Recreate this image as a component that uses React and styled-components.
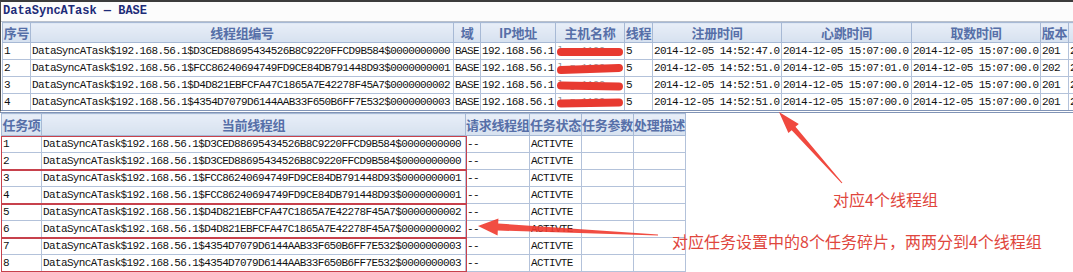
import React from 'react';
import styled, { createGlobalStyle } from 'styled-components';

const GlobalStyle = createGlobalStyle`
  html, body {
    margin: 0;
    padding: 0;
    background: #ffffff;
  }
  body {
    font-family: "Liberation Mono", monospace;
    overflow: hidden;
  }
`;

const MONO = `"Liberation Mono", "DejaVu Sans Mono", monospace`;
const CJK = `"Noto Sans CJK SC", "Noto Sans", sans-serif`;

const Page = styled.div`
  position: relative;
  width: 1073px;
  height: 272px;
  overflow: hidden;
  display: flex;
  flex-direction: column;
  background: #fff;
`;

const TopPanel = styled.section`
  border-top: 2px solid #3c3c3c;
  border-left: 1px solid #4a4a4a;
  border-bottom: 3px double #8194b6;
  overflow: hidden;
`;

const Title = styled.div`
  height: 19px;
  line-height: 19px;
  padding-left: 2px;
  font-family: ${MONO};
  font-weight: bold;
  font-size: 12px;
  color: #1d2b78;
  background: #fcfcfc;
  border-bottom: 1px solid #b9c0cb;
  white-space: nowrap;
`;

const Grid = styled.table`
  border-collapse: collapse;
  table-layout: fixed;
  width: ${p => p.$width}px;
  margin-left: ${p => p.$indent || 0}px;
`;

const Th = styled.th`
  height: ${p => p.$h || 19}px;
  padding: 0;
  background: linear-gradient(#e8eef8, #d6e1ef);
  border: 1px solid #a7b9d5;
  color: #566fa8;
  font-family: ${CJK};
  font-size: 13px;
  font-weight: bold;
  text-align: center;
  white-space: nowrap;
  overflow: hidden;
  letter-spacing: -0.3px;
`;

const Td = styled.td`
  height: 16px;
  padding: 0 0 0 1px;
  background: #fff;
  border: 1px solid #b3c2da;
  color: #111;
  font-family: ${MONO};
  font-size: 11px;
  letter-spacing: -0.63px;
  white-space: nowrap;
  overflow: hidden;
  position: relative;
`;

const Scribble = styled.span`
  position: absolute;
  left: 1px;
  top: 5px;
  width: 66px;
  height: 8px;
  border-radius: 5px;
  background: #e83a30;
  transform: rotate(${p => p.$tilt}deg);
`;

const FaintHost = styled.span`
  color: #999;
`;

const BottomWrap = styled.div`
  position: relative;
  align-self: flex-start;
  margin-left: 1px;
`;

const RedBox = styled.div`
  position: absolute;
  left: 0;
  width: 464px;
  height: 32px;
  top: ${p => 23 + p.$index * 34}px;
  border: 1px solid #c7414c;
  pointer-events: none;
`;

const Note = styled.div`
  position: absolute;
  left: ${p => p.$x}px;
  top: ${p => p.$y}px;
  font-family: ${CJK};
  font-size: 16px;
  line-height: 18px;
  color: #e0463d;
  white-space: nowrap;
`;

const Arrows = styled.svg`
  position: absolute;
  left: 0;
  top: 0;
  pointer-events: none;
`;

const topCols = [28, 423, 27, 75, 69, 28, 129, 130, 129, 28, 60];
const topHead = ['序号', '线程组编号', '域', 'IP地址', '主机名称', '线程', '注册时间', '心跳时间', '取数时间', '版本', ''];

const groups = [
  'D3CED88695434526B8C9220FFCD9B584$0000000000',
  'FCC86240694749FD9CE84DB791448D93$0000000001',
  'D4D821EBFCFA47C1865A7E42278F45A7$0000000002',
  '4354D7079D6144AAB33F650B6FF7E532$0000000003',
];
const prefix = 'DataSyncATask$192.168.56.1$';

const topRows = [
  { reg: '14:52:47.0', beat: '15:07:00.0', take: '15:07:00.0', ver: '201', tilt: 0 },
  { reg: '14:52:51.0', beat: '15:07:01.0', take: '15:07:00.0', ver: '202', tilt: -2 },
  { reg: '14:52:51.0', beat: '15:07:00.0', take: '15:07:00.0', ver: '201', tilt: 1 },
  { reg: '14:52:51.0', beat: '15:07:00.0', take: '15:07:00.0', ver: '201', tilt: -1 },
];

const bottomCols = [40, 424, 64, 52, 52, 52];
const bottomHead = ['任务项', '当前线程组', '请求线程组', '任务状态', '任务参数', '处理描述'];

const sum = arr => arr.reduce((a, b) => a + b, 0);

const App = () => (
  <Page>
    <GlobalStyle />
    <TopPanel>
      <Title>DataSyncATask — BASE</Title>
      <Grid $indent={1} $width={sum(topCols)}>
        <colgroup>
          {topCols.map((w, i) => <col key={i} style={{ width: w }} />)}
        </colgroup>
        <thead>
          <tr>
            {topHead.map((h, i) => <Th key={i}>{h}</Th>)}
          </tr>
        </thead>
        <tbody>
          {topRows.map((r, i) => (
            <tr key={i}>
              <Td>{i + 1}</Td>
              <Td>{prefix + groups[i]}</Td>
              <Td>BASE</Td>
              <Td>192.168.56.1</Td>
              <Td>
                <FaintHost>l g 1100</FaintHost>
                <Scribble $tilt={r.tilt} />
              </Td>
              <Td>5</Td>
              <Td>2014-12-05 {r.reg}</Td>
              <Td>2014-12-05 {r.beat}</Td>
              <Td>2014-12-05 {r.take}</Td>
              <Td>{r.ver}</Td>
              <Td>2014</Td>
            </tr>
          ))}
        </tbody>
      </Grid>
    </TopPanel>

    <BottomWrap>
      <Grid $width={sum(bottomCols)}>
        <colgroup>
          {bottomCols.map((w, i) => <col key={i} style={{ width: w }} />)}
        </colgroup>
        <thead>
          <tr>
            {bottomHead.map((h, i) => <Th key={i} $h={21}>{h}</Th>)}
          </tr>
        </thead>
        <tbody>
          {Array.from({ length: 8 }).map((_, i) => (
            <tr key={i}>
              <Td>{i + 1}</Td>
              <Td>{prefix + groups[Math.floor(i / 2)]}</Td>
              <Td>--</Td>
              <Td>ACTIVTE</Td>
              <Td />
              <Td />
            </tr>
          ))}
        </tbody>
      </Grid>
      {[0, 1, 2, 3].map(i => <RedBox key={i} $index={i} />)}
    </BottomWrap>

    <Note $x={833} $y={190}>对应4个线程组</Note>
    <Note $x={672} $y={232}>对应任务设置中的8个任务碎片，两两分到4个线程组</Note>

    <Arrows width="1073" height="272" viewBox="0 0 1073 272">
      <polygon
        fill="#ef3a2f"
        opacity="0.92"
        points="779,112 798.8,123.9 795.5,126.8 842.4,182.7 841.6,183.3 791.7,130.2 788.4,133.1"
      />
      <polygon
        fill="#ef3a2f"
        opacity="0.9"
        points="478,226 498.4,218.5 498.2,223.5 658,234.5 658,235.5 497.8,230.5 497.6,235.5"
      />
    </Arrows>
  </Page>
);

export default App;
